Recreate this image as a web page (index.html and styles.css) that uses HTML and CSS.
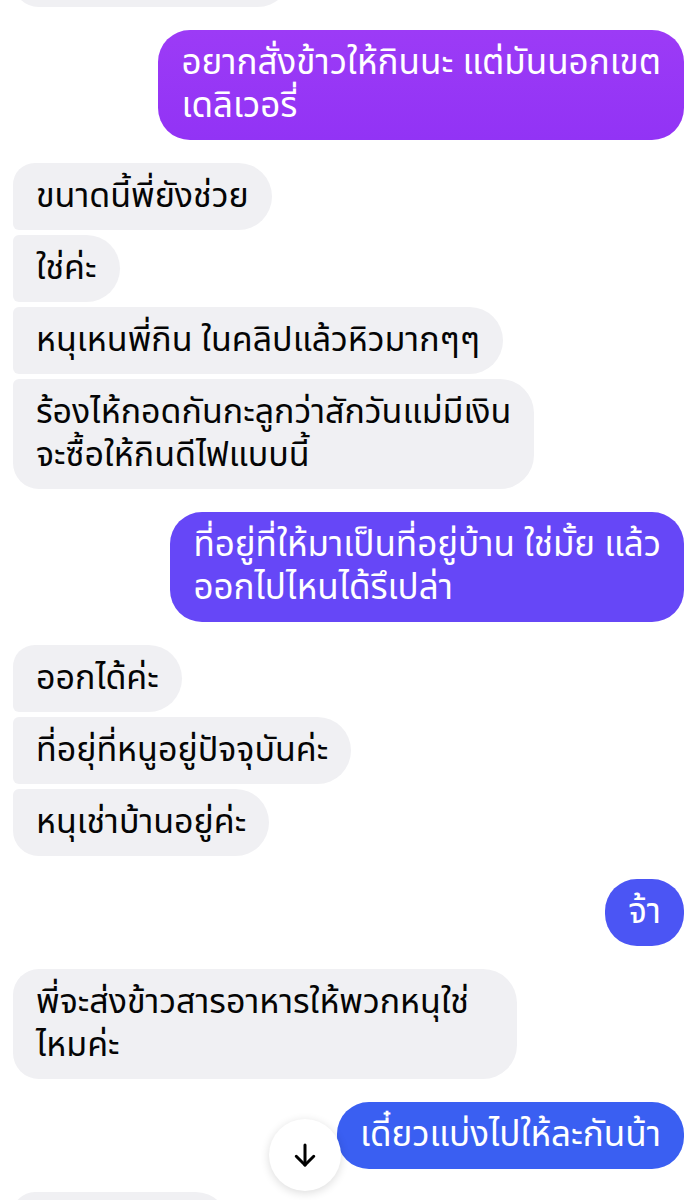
FILE: index.html
```html
<!DOCTYPE html>
<html lang="th">

<head>
    <meta charset="UTF-8">
    <meta name="viewport" content="width=device-width, initial-scale=1.0">
    <title>Chat</title>
    <link rel="stylesheet" href="styles.css">
</head>

<body>
    <div class="chat">
        <div class="group in">
            <div class="bubble in last ghost top-ghost"></div>
        </div>

        <div class="group out">
            <div class="bubble out c1">อยากสั่งข้าวให้กินนะ แต่มันนอกเขต<br>เดลิเวอรี่</div>
        </div>

        <div class="group in">
            <div class="bubble in first">ขนาดนี้พี่ยังช่วย</div>
            <div class="bubble in">ใช่ค่ะ</div>
            <div class="bubble in">หนุเหนพี่กิน ในคลิปแล้วหิวมากๆๆ</div>
            <div class="bubble in last">ร้องไห้กอดกันกะลูกว่าสักวันแม่มีเงิน<br>จะซื้อให้กินดีไฟแบบนี้</div>
        </div>

        <div class="group out">
            <div class="bubble out c2">ที่อยู่ที่ให้มาเป็นที่อยู่บ้าน ใช่มั้ย แล้ว<br>ออกไปไหนได้รึเปล่า</div>
        </div>

        <div class="group in">
            <div class="bubble in first">ออกได้ค่ะ</div>
            <div class="bubble in">ที่อยุ่ที่หนูอยู่ปัจจุบันค่ะ</div>
            <div class="bubble in last">หนุเช่าบ้านอยู่ค่ะ</div>
        </div>

        <div class="group out">
            <div class="bubble out c3">จ้า</div>
        </div>

        <div class="group in">
            <div class="bubble in single wide">พี่จะส่งข้าวสารอาหารให้พวกหนุใช่<br>ไหมค่ะ</div>
        </div>

        <div class="group out last-out">
            <div class="bubble out c4">เดี๋ยวแบ่งไปให้ละกันน้า</div>
            <button class="scroll-down" aria-label="Scroll down">
                <svg width="30" height="30" viewBox="0 0 24 24" fill="none" stroke="#000" stroke-width="2.4" stroke-linecap="round" stroke-linejoin="round">
                    <path d="M12 4v16"/>
                    <path d="M5 13l7 7 7-7"/>
                </svg>
            </button>
        </div>

        <div class="group in">
            <div class="bubble in first ghost bottom-ghost"></div>
        </div>
    </div>
</body>

</html>
```

FILE: styles.css
```css
body {
    margin: 0;
    background: #fff;
    font-family: 'Noto Sans Thai', 'Noto Sans', 'DejaVu Sans', sans-serif;
    color: #050505;
}

.chat {
    display: flex;
    flex-direction: column;
    gap: 23px;
    padding: 0 16px 0 13px;
    margin-top: -60px;
    height: 1260px;
    overflow: hidden;
}

.group {
    display: flex;
    flex-direction: column;
    gap: 5px;
}

.group.in {
    align-items: flex-start;
}

.group.out {
    align-items: flex-end;
}

.last-out {
    position: relative;
}

.bubble {
    font-size: 34px;
    line-height: 43px;
    padding: 12px 23px;
    white-space: nowrap;
}

.bubble.in {
    background: #f0f0f3;
    border-radius: 6px 34px 34px 6px;
}

.bubble.in.first {
    border-top-left-radius: 22px;
}

.bubble.in.last {
    border-bottom-left-radius: 26px;
}

.bubble.in.single {
    border-radius: 26px 34px 34px 26px;
}

.bubble.wide {
    padding-right: 48px;
}

.ghost {
    height: 43px;
    flex-shrink: 0;
}

.top-ghost {
    width: 232px;
}

.bottom-ghost {
    width: 170px;
}

.bubble.out {
    color: #fff;
    font-size: 35px;
    border-radius: 32px;
}

.c1 {
    background: linear-gradient(#9c3bf6, #9233f5);
}

.c2 {
    background: #6647f7;
}

.c3 {
    background: #4b55f4;
}

.c4 {
    background: #3a5ff2;
}

.scroll-down {
    position: absolute;
    left: 256px;
    top: 17px;
    width: 72px;
    height: 72px;
    border-radius: 50%;
    border: none;
    background: #fff;
    box-shadow: 0 2px 10px rgba(0, 0, 0, 0.14);
    display: flex;
    align-items: center;
    justify-content: center;
    padding: 0;
}
```
